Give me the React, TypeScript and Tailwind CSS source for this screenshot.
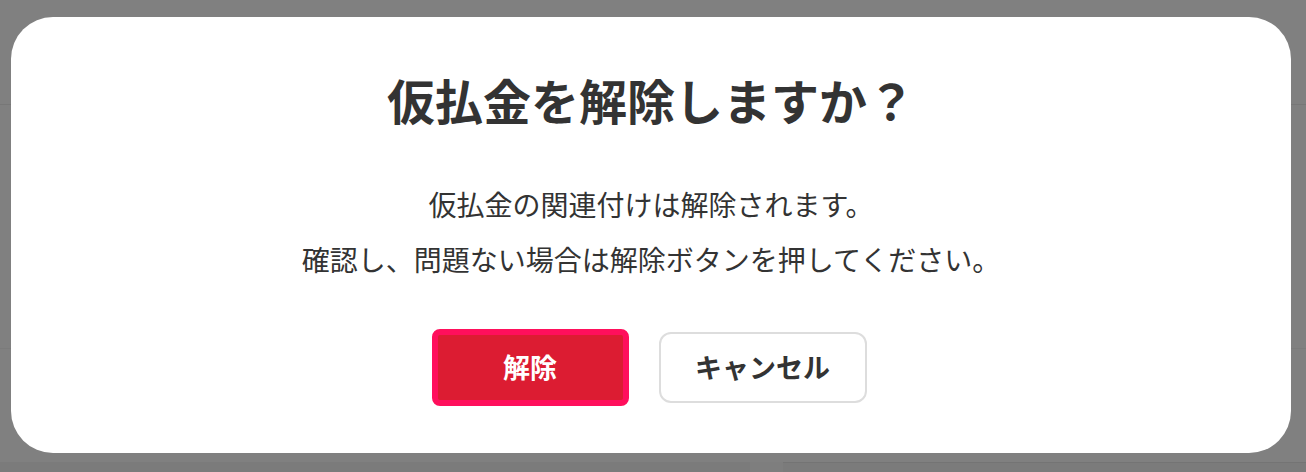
import React from "react"

export default function App() {
  return (
    <div className="relative h-[472px] w-full overflow-hidden bg-[#808080] font-['Noto_Sans_CJK_JP',sans-serif]">
      {/* page underneath the overlay */}
      <div className="flex h-full flex-col">
        <div className="h-[104px]" />
        <div className="h-[244px] border-t border-[#777777]" />
        <div className="h-[114px] border-t border-[#7b7b7b]" />
        <div className="flex h-[10px]">
          <div className="w-[750px] bg-[#7b7b7b]" />
          <div className="w-[33px] bg-[#7e7e7e]" />
          <div className="flex-1 border-t border-[#747474] bg-[#7b7b7b]" />
        </div>
      </div>

      {/* dialog */}
      <div className="absolute left-[11px] top-[17px] flex h-[436px] w-[1280px] flex-col items-center rounded-[42px] bg-white pt-[47px] text-[#333333]">
        <h2 className="text-[48px] font-bold leading-[70px]">仮払金を解除しますか？</h2>
        <p className="mt-[43px] text-[28px] leading-[55px]">仮払金の関連付けは解除されます。</p>
        <p className="text-[28px] leading-[55px]">確認し、問題ない場合は解除ボタンを押してください。</p>
        <div className="mt-[42px] flex items-center gap-[30px] pr-[4px]">
          <button className="flex h-[77px] w-[197px] items-center justify-center rounded-[8px] border-[6px] border-[#ff0f5c] bg-[#dc1c32] text-[27px] font-bold text-white">
            解除
          </button>
          <button className="flex h-[71px] w-[208px] items-center justify-center rounded-[12px] border-2 border-[#dddddd] bg-white text-[27px] font-bold text-[#333333]">
            キャンセル
          </button>
        </div>
      </div>
    </div>
  )
}
